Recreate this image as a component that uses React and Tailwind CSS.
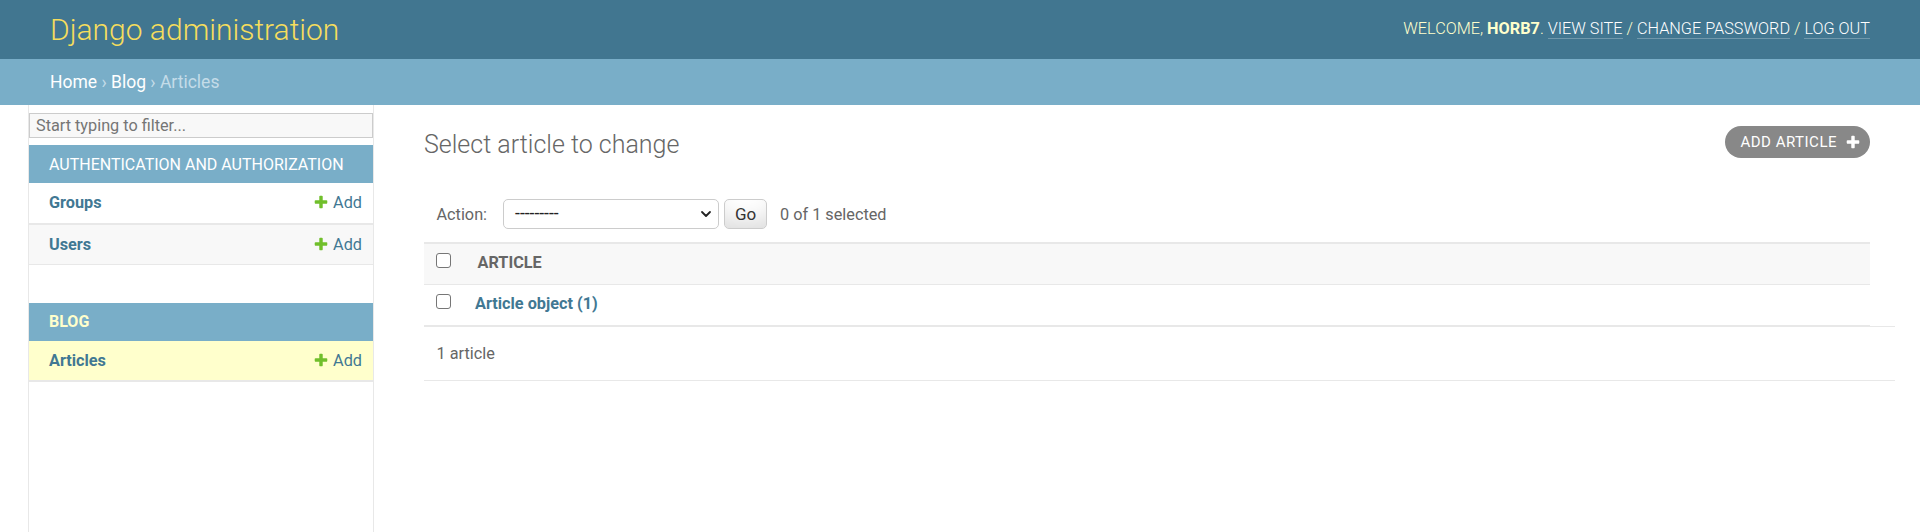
import React from "react";

const PLUS =
  "M1600 796v192q0 40-28 68t-68 28h-416v416q0 40-28 68t-68 28h-192q-40 0-68-28t-28-68v-416h-416q-40 0-68-28t-28-68v-192q0-40 28-68t68-28h416v-416q0-40 28-68t68-28h192q40 0 68 28t28 68v416h416q40 0 68 28t28 68z";

function PlusIcon({ color }) {
  return (
    <svg width="16" height="16" viewBox="0 0 1792 1792" className="shrink-0">
      <path fill={color} d={PLUS} />
    </svg>
  );
}

function AddLink() {
  return (
    <div className="flex items-start pr-[11px] pt-[10px] leading-[20px]">
      <span className="mt-[1px]">
        <PlusIcon color="#70bf2b" />
      </span>
      <span className="ml-[4px] text-[#417893]">Add</span>
    </div>
  );
}

function SideRow({ label, h, border, bg }) {
  return (
    <div
      className={`flex justify-between items-start border-[#e8e8e8] text-[16.25px] ${h} ${border} ${bg}`}
    >
      <div className="pl-[20px] pt-[10px] leading-[20px] font-bold text-[#417893]">
        {label}
      </div>
      <AddLink />
    </div>
  );
}

function Checkbox() {
  return (
    <div className="w-[15px] h-[15px] rounded-[3px] border border-[#767676] bg-white" />
  );
}

export default function App() {
  return (
    <div className="min-h-screen flex flex-col bg-white text-[#333] font-[family-name:Roboto,sans-serif]">
      {/* Header */}
      <header className="h-[59px] shrink-0 bg-[#417690] flex items-center justify-between px-[50px]">
        <div className="text-[30px] font-light leading-[normal] text-[#f5dd5d]">
          Django administration
        </div>
        <div className="mb-[2px] text-[16.25px] font-light leading-[normal] text-[#ffffcc]">
          WELCOME, <strong className="font-bold">HORB7</strong>.{" "}
          <a className="text-white border-b border-white/25">VIEW SITE</a> /{" "}
          <a className="text-white border-b border-white/25">CHANGE PASSWORD</a> /{" "}
          <a className="text-white border-b border-white/25">LOG OUT</a>
        </div>
      </header>

      {/* Breadcrumbs */}
      <div className="h-[46px] shrink-0 bg-[#79aec8] flex items-center px-[50px] text-[17.5px] leading-[normal] text-[#c4dce8]">
        <a className="text-white">Home</a>
        <span>&nbsp;›&nbsp;</span>
        <a className="text-white">Blog</a>
        <span>&nbsp;›&nbsp;Articles</span>
      </div>

      {/* Main */}
      <div className="flex flex-1">
        <div className="w-[29px] shrink-0 border-r border-[#e8e8e8]" />
        <nav className="w-[345px] shrink-0 border-r border-[#e8e8e8]">
          <input
            readOnly
            placeholder="Start typing to filter..."
            className="mt-[8px] mb-[7px] block w-full h-[25px] border border-[#cccccc] bg-[#f8f8f8] px-[6px] text-[16.25px] text-[#333] placeholder:text-[#757575] outline-none"
          />
          <div>
            <div className="h-[38px] flex items-center pl-[20px] bg-[#79aec8] text-white text-[16px] leading-[normal]">
              AUTHENTICATION AND AUTHORIZATION
            </div>
            <SideRow label="Groups" h="h-[42px]" border="border-b-2" bg="bg-white" />
            <SideRow label="Users" h="h-[40px]" border="border-b" bg="bg-[#f8f8f8]" />
          </div>
          <div className="mt-[37.5px]">
            <div className="h-[38px] flex items-center pl-[20px] bg-[#79aec8] text-[#ffffcc] font-bold text-[16px] leading-[normal]">
              BLOG
            </div>
            <SideRow label="Articles" h="h-[41px]" border="border-b-2" bg="bg-[#ffffcc]" />
          </div>
        </nav>

        <main className="flex-1 min-w-0 px-[50px] pt-[25px]">
          <div className="h-[54px] flex justify-between items-start">
            <h1 className="text-[25px] font-light leading-[normal] text-[#666]">
              Select article to change
            </h1>
            <a className="-mt-[4px] h-[32px] flex items-center rounded-full bg-[#888888] pl-[15px] pr-[9px] text-white text-[15px] leading-[normal] tracking-[0.5px] uppercase">
              <span>Add article</span>
              <span className="ml-[8px]">
                <PlusIcon color="#ffffff" />
              </span>
            </a>
          </div>

          {/* Actions */}
          <div className="h-[58px] pt-[2px] flex items-center px-[12.5px] text-[16.25px] leading-[normal] text-[#666]">
            <span>Action:</span>
            <div className="ml-[16px] w-[216px] h-[30px] flex items-center justify-between border border-[#cccccc] rounded-[5px] bg-white pl-[11px] pr-[6px] text-[17.5px] text-[#222]">
              <span className="leading-none">---------</span>
              <svg width="12" height="12" viewBox="0 0 12 12">
                <path d="M2 4 L6 8 L10 4" fill="none" stroke="#222" strokeWidth="1.8" strokeLinecap="round" strokeLinejoin="round" />
              </svg>
            </div>
            <div className="ml-[5px] w-[43px] h-[30px] flex items-center justify-center border border-[#cccccc] rounded-[5px] bg-white shadow-[inset_0_-19px_25px_-12px_rgba(0,0,0,0.15)] text-[17px] text-[#333]">
              Go
            </div>
            <span className="ml-[13px]">0 of 1 selected</span>
          </div>

          {/* Table */}
          <div>
            <div className="h-[43px] flex items-start border-t-2 border-b border-[#e8e8e8] bg-[#f8f8f8]">
              <div className="w-[41px] pl-[12px] pt-[9px]">
                <Checkbox />
              </div>
              <div className="pl-[12.5px] pt-[9px] text-[16.25px] leading-[normal] font-bold text-[#666]">
                ARTICLE
              </div>
            </div>
            <div className="h-[41px] flex items-start border-b border-[#e8e8e8] bg-white">
              <div className="w-[41px] pl-[12px] pt-[9px]">
                <Checkbox />
              </div>
              <div className="pl-[10px] pt-[9px] text-[16.25px] leading-[normal] font-bold text-[#417893]">
                Article object (1)
              </div>
            </div>
          </div>
          <div className="mr-[-25px] h-[55px] border-t border-b border-[#e8e8e8] pt-[12.5px] pl-[12.5px] text-[16.25px] leading-[27.5px] text-[#666]">
            1 article
          </div>
        </main>
      </div>
    </div>
  );
}
